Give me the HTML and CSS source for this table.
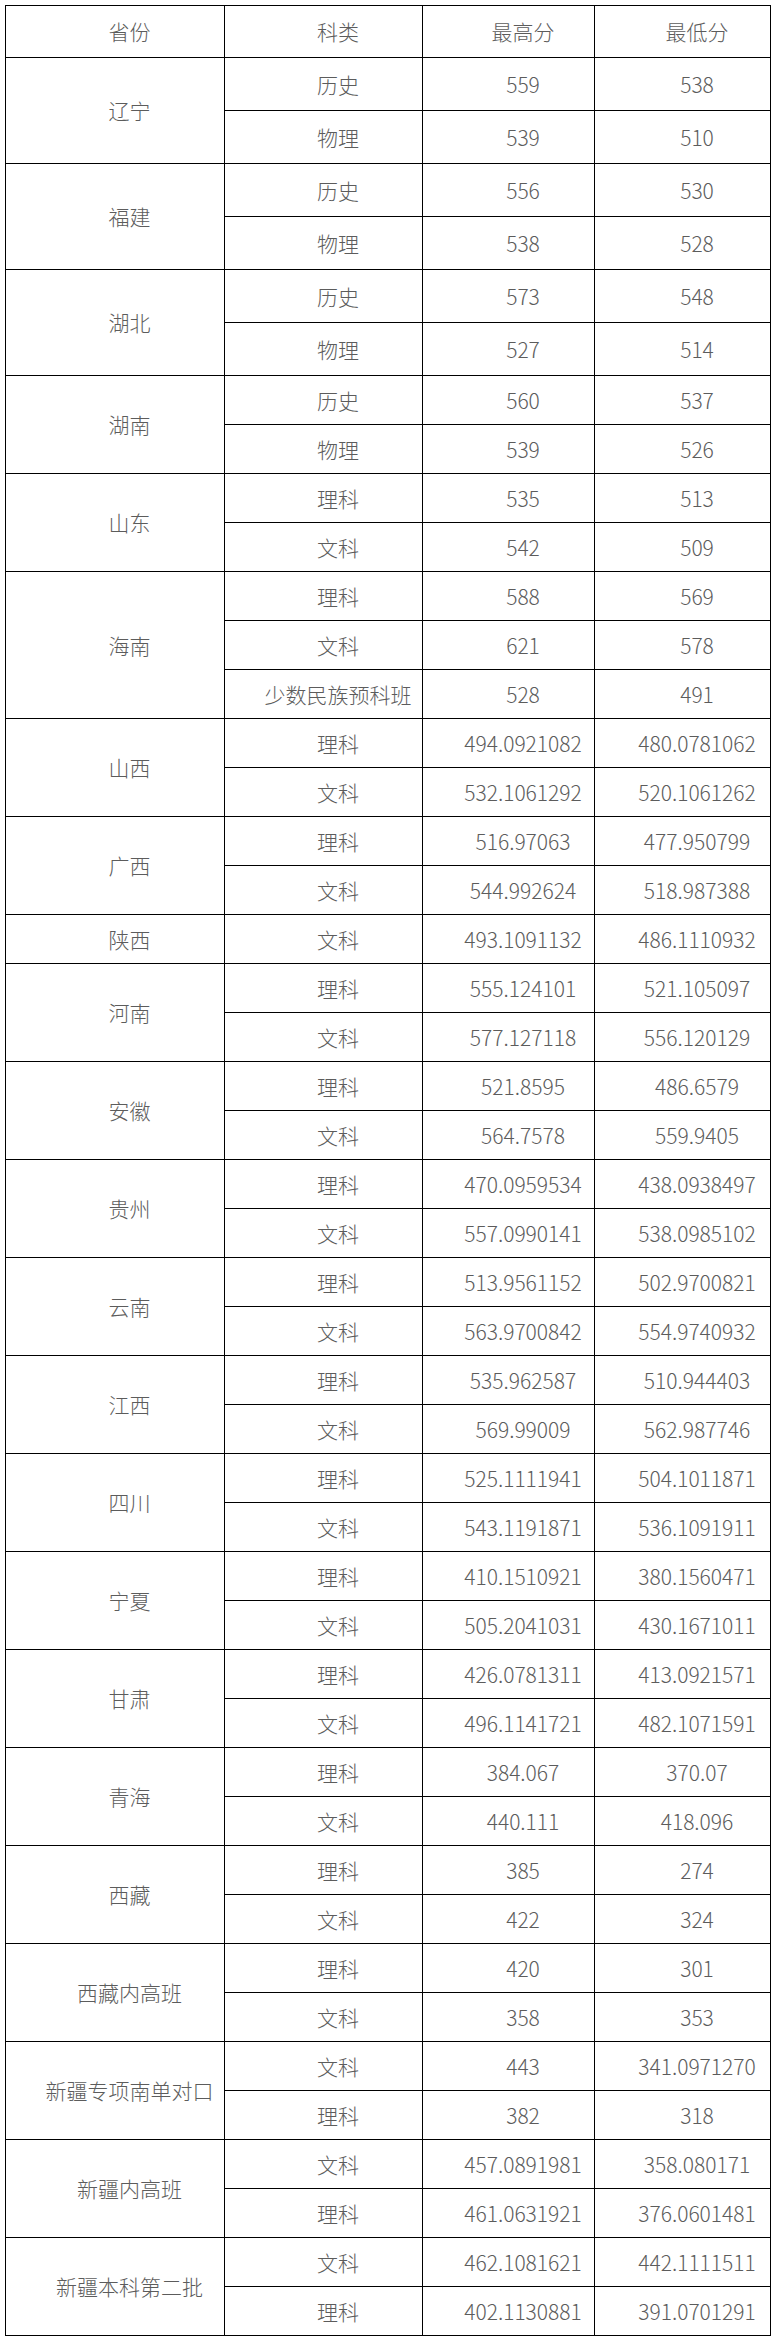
FILE: index.html
```html
<!DOCTYPE html>
<html lang="zh-CN">
<head>
<meta charset="utf-8">
<title>分数表</title>
<link rel="stylesheet" href="styles.css">
</head>
<body>
<table class="scores">
<colgroup><col class="c1"><col class="c2"><col class="c3"><col class="c4"></colgroup>
<tr class="hd"><td>省份</td><td>科类</td><td>最高分</td><td>最低分</td></tr>
<tr class="tall"><td rowspan="2">辽宁</td><td>历史</td><td>559</td><td>538</td></tr>
<tr class="tall"><td>物理</td><td>539</td><td>510</td></tr>
<tr class="tall"><td rowspan="2">福建</td><td>历史</td><td>556</td><td>530</td></tr>
<tr class="tall"><td>物理</td><td>538</td><td>528</td></tr>
<tr class="tall"><td rowspan="2">湖北</td><td>历史</td><td>573</td><td>548</td></tr>
<tr class="tall"><td>物理</td><td>527</td><td>514</td></tr>
<tr><td rowspan="2">湖南</td><td>历史</td><td>560</td><td>537</td></tr>
<tr><td>物理</td><td>539</td><td>526</td></tr>
<tr><td rowspan="2">山东</td><td>理科</td><td>535</td><td>513</td></tr>
<tr><td>文科</td><td>542</td><td>509</td></tr>
<tr><td rowspan="3">海南</td><td>理科</td><td>588</td><td>569</td></tr>
<tr><td>文科</td><td>621</td><td>578</td></tr>
<tr><td>少数民族预科班</td><td>528</td><td>491</td></tr>
<tr><td rowspan="2">山西</td><td>理科</td><td>494.0921082</td><td>480.0781062</td></tr>
<tr><td>文科</td><td>532.1061292</td><td>520.1061262</td></tr>
<tr><td rowspan="2">广西</td><td>理科</td><td>516.97063</td><td>477.950799</td></tr>
<tr><td>文科</td><td>544.992624</td><td>518.987388</td></tr>
<tr><td>陕西</td><td>文科</td><td>493.1091132</td><td>486.1110932</td></tr>
<tr><td rowspan="2">河南</td><td>理科</td><td>555.124101</td><td>521.105097</td></tr>
<tr><td>文科</td><td>577.127118</td><td>556.120129</td></tr>
<tr><td rowspan="2">安徽</td><td>理科</td><td>521.8595</td><td>486.6579</td></tr>
<tr><td>文科</td><td>564.7578</td><td>559.9405</td></tr>
<tr><td rowspan="2">贵州</td><td>理科</td><td>470.0959534</td><td>438.0938497</td></tr>
<tr><td>文科</td><td>557.0990141</td><td>538.0985102</td></tr>
<tr><td rowspan="2">云南</td><td>理科</td><td>513.9561152</td><td>502.9700821</td></tr>
<tr><td>文科</td><td>563.9700842</td><td>554.9740932</td></tr>
<tr><td rowspan="2">江西</td><td>理科</td><td>535.962587</td><td>510.944403</td></tr>
<tr><td>文科</td><td>569.99009</td><td>562.987746</td></tr>
<tr><td rowspan="2">四川</td><td>理科</td><td>525.1111941</td><td>504.1011871</td></tr>
<tr><td>文科</td><td>543.1191871</td><td>536.1091911</td></tr>
<tr><td rowspan="2">宁夏</td><td>理科</td><td>410.1510921</td><td>380.1560471</td></tr>
<tr><td>文科</td><td>505.2041031</td><td>430.1671011</td></tr>
<tr><td rowspan="2">甘肃</td><td>理科</td><td>426.0781311</td><td>413.0921571</td></tr>
<tr><td>文科</td><td>496.1141721</td><td>482.1071591</td></tr>
<tr><td rowspan="2">青海</td><td>理科</td><td>384.067</td><td>370.07</td></tr>
<tr><td>文科</td><td>440.111</td><td>418.096</td></tr>
<tr><td rowspan="2">西藏</td><td>理科</td><td>385</td><td>274</td></tr>
<tr><td>文科</td><td>422</td><td>324</td></tr>
<tr><td rowspan="2">西藏内高班</td><td>理科</td><td>420</td><td>301</td></tr>
<tr><td>文科</td><td>358</td><td>353</td></tr>
<tr><td rowspan="2">新疆专项南单对口</td><td>文科</td><td>443</td><td>341.0971270</td></tr>
<tr><td>理科</td><td>382</td><td>318</td></tr>
<tr><td rowspan="2">新疆内高班</td><td>文科</td><td>457.0891981</td><td>358.080171</td></tr>
<tr><td>理科</td><td>461.0631921</td><td>376.0601481</td></tr>
<tr><td rowspan="2">新疆本科第二批</td><td>文科</td><td>462.1081621</td><td>442.1111511</td></tr>
<tr><td>理科</td><td>402.1130881</td><td>391.0701291</td></tr>
</table>
</body>
</html>
```

FILE: styles.css
```css
html, body {
  margin: 0;
  padding: 0;
  background: #ffffff;
}

.scores {
  margin: 5px 0 0 5px;
  border-collapse: collapse;
  table-layout: fixed;
  width: 765px;
  font-family: "Noto Sans CJK SC", "Noto Sans", sans-serif;
  font-size: 21px;
  font-weight: 300;
  line-height: 1;
  color: #5c5c5c;
}

.c1 { width: 219px; }
.c2 { width: 198px; }
.c3 { width: 172px; }
.c4 { width: 176px; }

.scores td {
  border: 1px solid #000000;
  padding: 0 0 0 29px;
  text-align: center;
  vertical-align: middle;
  white-space: nowrap;
}

.scores tr { height: 49px; }
.scores tr.tall { height: 53px; }
.scores tr.hd { height: 52px; }
```
